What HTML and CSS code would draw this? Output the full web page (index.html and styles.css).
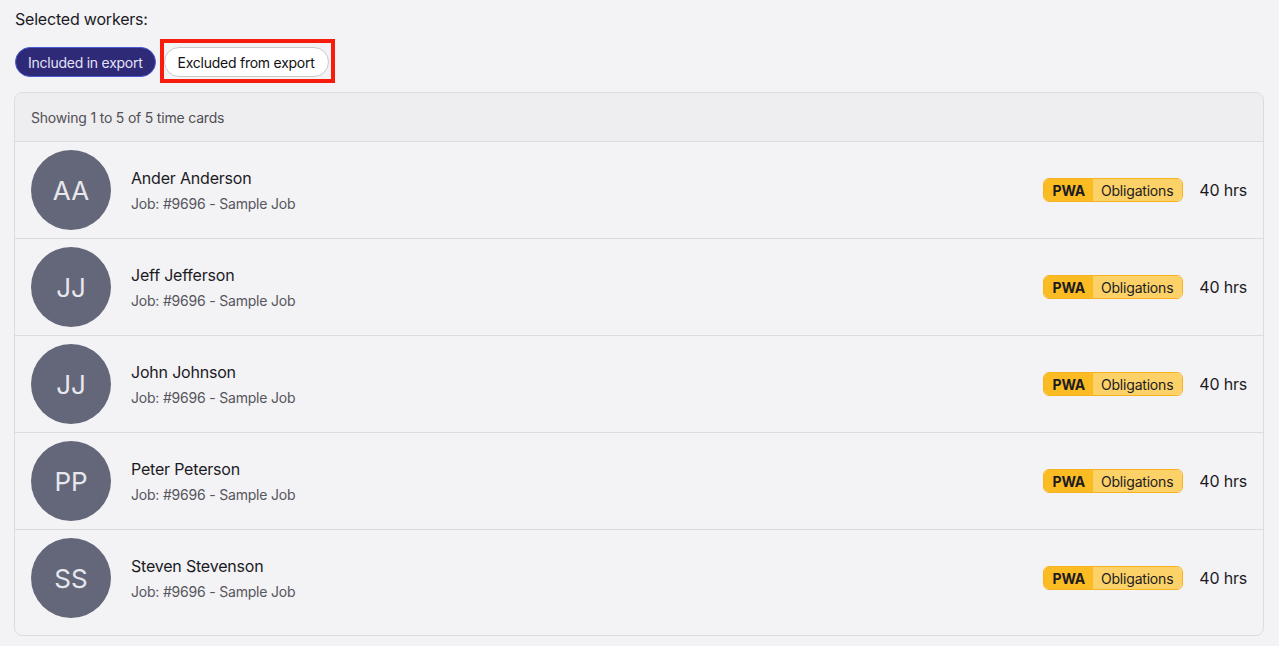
FILE: index.html
```html
<!DOCTYPE html>
<html lang="en">
<head>
<meta charset="utf-8">
<title>Selected workers</title>
<link rel="stylesheet" href="styles.css">
</head>
<body>
<div class="page">
  <div class="title">Selected workers:</div>
  <div class="tabs">
    <button class="tab tab-active">Included in export</button>
    <button class="tab tab-outline"><span class="highlight"></span>Excluded from export</button>
  </div>
  <div class="card">
    <div class="card-header">Showing 1 to 5 of 5 time cards</div>
    <div class="row">
      <div class="avatar">AA</div>
      <div class="info"><div class="name">Ander Anderson</div><div class="job">Job: #9696 - Sample Job</div></div>
      <div class="badge"><span class="badge-key">PWA</span><span class="badge-val">Obligations</span></div>
      <div class="hrs">40 hrs</div>
    </div>
    <div class="row">
      <div class="avatar">JJ</div>
      <div class="info"><div class="name">Jeff Jefferson</div><div class="job">Job: #9696 - Sample Job</div></div>
      <div class="badge"><span class="badge-key">PWA</span><span class="badge-val">Obligations</span></div>
      <div class="hrs">40 hrs</div>
    </div>
    <div class="row">
      <div class="avatar">JJ</div>
      <div class="info"><div class="name">John Johnson</div><div class="job">Job: #9696 - Sample Job</div></div>
      <div class="badge"><span class="badge-key">PWA</span><span class="badge-val">Obligations</span></div>
      <div class="hrs">40 hrs</div>
    </div>
    <div class="row">
      <div class="avatar">PP</div>
      <div class="info"><div class="name">Peter Peterson</div><div class="job">Job: #9696 - Sample Job</div></div>
      <div class="badge"><span class="badge-key">PWA</span><span class="badge-val">Obligations</span></div>
      <div class="hrs">40 hrs</div>
    </div>
    <div class="row">
      <div class="avatar">SS</div>
      <div class="info"><div class="name">Steven Stevenson</div><div class="job">Job: #9696 - Sample Job</div></div>
      <div class="badge"><span class="badge-key">PWA</span><span class="badge-val">Obligations</span></div>
      <div class="hrs">40 hrs</div>
    </div>
  </div>
</div>
</body>
</html>
```
FILE: styles.css
```css
* { box-sizing: border-box; }
html, body {
  margin: 0;
  background: #f3f2f5;
  font-family: Inter, "Liberation Sans", Arial, sans-serif;
  color: #1b1b1f;
  letter-spacing: -0.2px;
}
.page {
  padding: 8px 15px 0 14px;
}
.title {
  font-size: 16px;
  line-height: 22px;
  padding-left: 1px;
}
.tabs {
  display: flex;
  gap: 8px;
  margin-top: 17px;
  padding-left: 1px;
}
.tab {
  position: relative;
  height: 30px;
  border-radius: 15px;
  font-family: inherit;
  font-size: 14px;
  letter-spacing: -0.25px;
  padding: 0 12px;
  white-space: nowrap;
  cursor: pointer;
}
.tab-active {
  background: #2e2a78;
  border: 1px solid #4d5bd6;
  color: #e4e3f5;
}
.tab-outline {
  background: #ffffff;
  border: 1px solid #c9c8cd;
  color: #111;
  padding: 0 13px;
}
.highlight {
  position: absolute;
  left: -5px;
  top: -9px;
  right: -7px;
  bottom: -7px;
  border: 4px solid #f81c0c;
  pointer-events: none;
}
.card {
  margin-top: 15px;
  border: 1px solid #dcdbdf;
  border-radius: 8px;
  overflow: hidden;
  padding-bottom: 9px;
}
.card-header {
  height: 49px;
  background: #eeedf0;
  border-bottom: 1px solid #dcdbdf;
  padding: 0 16px;
  display: flex;
  align-items: center;
  font-size: 14px;
  color: #505055;
}
.row {
  height: 97px;
  display: flex;
  align-items: center;
  padding: 0 16px;
  border-bottom: 1px solid #dcdbdf;
}
.row:last-child { border-bottom: none; height: 96px; }
.avatar {
  width: 80px;
  height: 80px;
  border-radius: 50%;
  background: #636779;
  color: #e7e7ee;
  font-size: 26px;
  letter-spacing: 0;
  display: flex;
  align-items: center;
  justify-content: center;
  flex-shrink: 0;
}
.info {
  margin-left: 20px;
  flex: 1;
  padding-top: 2px;
}
.name {
  font-size: 16px;
  line-height: 24px;
  margin-bottom: 2px;
}
.job {
  font-size: 14px;
  line-height: 24px;
  color: #56565c;
}
.badge {
  display: flex;
  height: 24px;
  border: 1px solid #f7b21f;
  border-radius: 6px;
  overflow: hidden;
  font-size: 14px;
  color: #1b1b1f;
}
.badge-key {
  background: #fbbc23;
  font-weight: 700;
  padding: 0 8px 0 9px;
  display: flex;
  align-items: center;
}
.badge-val {
  background: #fcd168;
  padding: 0 9px 0 8px;
  display: flex;
  align-items: center;
}
.hrs {
  margin-left: 16px;
  font-size: 16px;
}
```
